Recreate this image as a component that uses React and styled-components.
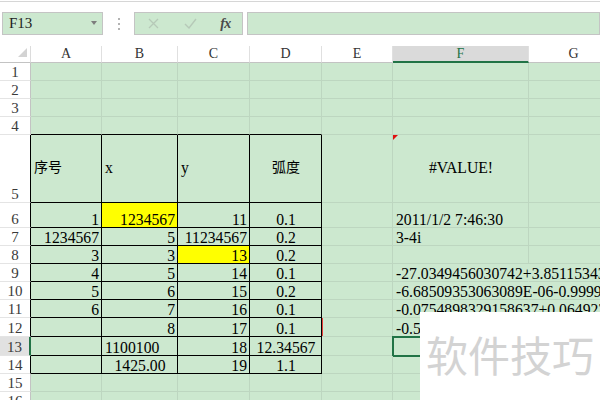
import React from 'react';
import styled, { createGlobalStyle, css } from 'styled-components';

const GREEN = '#cce8cf';
const GRID = '#bdd6c0';
const XL = '#217346';
const SERIF = '"Liberation Serif", "Noto Sans CJK SC", serif';

const Global = createGlobalStyle`
  html, body { margin: 0; padding: 0; background: #fff; }
  body { width: 600px; height: 400px; overflow: hidden; }
`;

const Screen = styled.div`
  position: relative;
  width: 600px;
  height: 400px;
  overflow: hidden;
  background: #fff;
  font-family: ${SERIF};
`;

const FormulaBar = styled.div`
  box-sizing: border-box;
  height: 45px;
  margin-top: 1px;
  border-top: 1px solid #d6d6d6;
  padding: 10px 0 0 2px;
  display: flex;
  align-items: flex-start;
`;

const Box = styled.div`
  box-sizing: border-box;
  height: 23px;
  border: 1px solid #c4c4c4;
  background: ${GREEN};
  display: flex;
  align-items: center;
`;

const NameBox = styled(Box)`
  width: 101px;
  padding: 0 5px 0 6px;
  justify-content: space-between;
  font-size: 15px;
  color: #222;
`;

const Caret = styled.span`
  width: 0;
  height: 0;
  border-left: 3.5px solid transparent;
  border-right: 3.5px solid transparent;
  border-top: 4px solid #7d7d7d;
  margin-top: -2px;
`;

const Dots = styled.div`
  width: 31px;
  height: 23px;
  display: flex;
  flex-direction: column;
  align-items: center;
  justify-content: center;
  gap: 3px;
`;

const Dot = styled.span`
  width: 2px;
  height: 2px;
  background: #b3b3b3;
`;

const ActionBox = styled(Box)`
  width: 109px;
  display: grid;
  grid-template-columns: 36px 38px 33px;
  justify-items: center;
`;

const Fx = styled.span`
  font-family: "Liberation Serif", serif;
  font-style: italic;
  font-weight: bold;
  font-size: 14px;
  color: #4a4a4a;
  letter-spacing: -0.5px;
`;

const FormulaInput = styled(Box)`
  flex: 1;
  margin-left: 4px;
`;

const Sheet = styled.div`
  display: grid;
  grid-template-columns: 31px 71px 76px 72px 72px 71px 136px 90px;
  grid-template-rows: 17px repeat(4, 18px) 68px 25px repeat(5, 18px) 19px 19px repeat(3, 18px);
  background: ${GREEN};
`;

const Corner = styled.div`
  box-sizing: border-box;
  background: #fff;
  border-right: 1px solid #dcdcdc;
  border-bottom: 1px solid #c3c3c3;
  display: flex;
  align-items: flex-end;
  justify-content: flex-end;
  padding: 0 3px 5px 0;
`;

const CornerMark = styled.span`
  width: 0;
  height: 0;
  border-left: 9px solid transparent;
  border-bottom: 9px solid #d3d3d3;
`;

const ColHead = styled.div`
  box-sizing: border-box;
  background: ${p => (p.$active ? '#dadada' : '#fff')};
  border-right: 1px solid #e0e0e0;
  border-bottom: ${p => (p.$active ? `2px solid ${XL}` : '1px solid #c3c3c3')};
  color: ${p => (p.$active ? XL : '#333')};
  font-size: 14px;
  line-height: 12px;
  display: flex;
  align-items: flex-end;
  justify-content: center;
  padding-bottom: ${p => (p.$active ? '1px' : '2px')};
`;

const RowHead = styled.div`
  box-sizing: border-box;
  background: ${p => (p.$active ? '#e1e1e1' : '#fff')};
  border-bottom: 1px solid #e4e4e4;
  border-right: ${p => (p.$active ? `2px solid ${XL}` : `1px solid ${p.$br || '#c3c3c3'}`)};
  color: #3a3a3a;
  font-size: 15px;
  line-height: 12px;
  display: flex;
  align-items: flex-end;
  justify-content: center;
  padding: 0 0 2px 0;
`;

const justify = { l: 'flex-start', r: 'flex-end', c: 'center' };

const Cell = styled.div`
  box-sizing: border-box;
  position: relative;
  min-width: 0;
  border-right: 1px solid ${p => p.$br || GRID};
  border-bottom: 1px solid ${p => p.$bb || GRID};
  background: ${p => p.$bg || 'transparent'};
  display: flex;
  align-items: ${p => (p.$mid ? 'center' : 'flex-end')};
  justify-content: ${p => justify[p.$align || 'l']};
  padding: 0 2px 1px 3px;
  font-size: ${p => (p.$cjk ? '14px' : '15.7px')};
  line-height: 12px;
  color: #000;
  white-space: nowrap;
  ${p => p.$sel && css`
    outline: 2px solid ${XL};
    outline-offset: -1px;
  `}
  ${p => p.$redLeft && css`
    box-shadow: inset 1px 0 0 #e8403a;
  `}
  ${p => p.$flag && css`
    &::before {
      content: '';
      position: absolute;
      top: 0;
      left: 0;
      border-top: 5px solid #e01010;
      border-right: 5px solid transparent;
    }
  `}
`;

const Watermark = styled.div`
  position: absolute;
  z-index: 5;
  left: 420px;
  top: 312px;
  width: 180px;
  height: 88px;
  background: #fff;
  display: flex;
  align-items: center;
  justify-content: center;
  padding-bottom: 6px;
  box-sizing: border-box;
  font-family: "Noto Sans CJK SC", sans-serif;
  font-size: 42px;
  color: #d3d3d3;
`;

const XIcon = () => (
  <svg width="11" height="11" viewBox="0 0 11 11">
    <path d="M1 1 L10 10 M10 1 L1 10" stroke="#b6c9b8" strokeWidth="1.3" fill="none" />
  </svg>
);

const CheckIcon = () => (
  <svg width="13" height="11" viewBox="0 0 13 11">
    <path d="M1 6 L5 10 L12 1" stroke="#b6c9b8" strokeWidth="1.4" fill="none" />
  </svg>
);

const COLS = ['A', 'B', 'C', 'D', 'E', 'F', 'G'];
const Yel = '#ffff00';
const R = (t, o = {}) => ({ t, a: 'r', ...o });
const L = (t, o = {}) => ({ t, a: 'l', ...o });
const C = (t, o = {}) => ({ t, a: 'c', ...o });

const rows = [
  { n: 1 },
  { n: 2 },
  { n: 3 },
  { n: 4 },
  { n: 5, mid: true, c: { A: L('序号', { cjk: 1 }), B: L('x'), C: L('y'), D: C('弧度', { cjk: 1 }), F: C('#VALUE!', { flag: 1 }) } },
  { n: 6, c: { A: R('1'), B: R('1234567', { bg: Yel }), C: R('11'), D: C('0.1'), F: L('2011/1/2 7:46:30') } },
  { n: 7, c: { A: R('1234567'), B: R('5'), C: R('11234567'), D: C('0.2'), F: L('3-4i') } },
  { n: 8, c: { A: R('3'), B: R('3'), C: R('13', { bg: Yel }), D: C('0.2') } },
  { n: 9, c: { A: R('4'), B: R('5'), C: R('14'), D: C('0.1'), F: L('-27.0349456030742+3.85115343828971i', { over: 1 }) } },
  { n: 10, c: { A: R('5'), B: R('6'), C: R('15'), D: C('0.2'), F: L('-6.68509353063089E-06-0.999999999977656i', { over: 1 }) } },
  { n: 11, c: { A: R('6'), B: R('7'), C: R('16'), D: C('0.1'), F: L('-0.0754898329158637+0.0649231506362186i', { over: 1 }) } },
  { n: 12, c: { B: R('8'), C: R('17'), D: C('0.1'), E: { redLeft: 1 }, F: L('-0.5+0.866025403784439i', { over: 1 }) } },
  { n: 13, active: true, c: { B: L('1100100'), C: R('18'), D: C('12.34567'), F: { sel: 1 } } },
  { n: 14, c: { B: C('1425.00'), C: R('19'), D: C('1.1') } },
  { n: 15 },
  { n: 16 },
];

const inTable = (n, col) => n >= 5 && n <= 14 && ['A', 'B', 'C', 'D'].includes(col);

export default function App() {
  return (
    <Screen>
      <Global />
      <FormulaBar>
        <NameBox>
          <span>F13</span>
          <Caret />
        </NameBox>
        <Dots>
          <Dot />
          <Dot />
          <Dot />
        </Dots>
        <ActionBox>
          <XIcon />
          <CheckIcon />
          <Fx>fx</Fx>
        </ActionBox>
        <FormulaInput />
      </FormulaBar>
      <Sheet>
        <Corner>
          <CornerMark />
        </Corner>
        {COLS.map(c => (
          <ColHead key={c} $active={c === 'F'}>{c}</ColHead>
        ))}
        {rows.map(row => (
          <React.Fragment key={row.n}>
            <RowHead $active={row.active} $br={row.n >= 5 && row.n <= 14 ? '#000' : undefined}>
              {row.n}
            </RowHead>
            {COLS.map(col => {
              const d = (row.c && row.c[col]) || {};
              const table = inTable(row.n, col);
              const topOfTable = row.n === 4 && ['A', 'B', 'C', 'D'].includes(col);
              return (
                <Cell
                  key={col}
                  $align={d.a}
                  $mid={row.mid}
                  $bg={d.bg}
                  $cjk={d.cjk}
                  $sel={d.sel}
                  $flag={d.flag}
                  $redLeft={d.redLeft}
                  $br={table ? '#000' : d.over ? 'transparent' : undefined}
                  $bb={table || topOfTable ? '#000' : undefined}
                >
                  {d.t}
                </Cell>
              );
            })}
          </React.Fragment>
        ))}
      </Sheet>
      <Watermark>软件技巧</Watermark>
    </Screen>
  );
}
